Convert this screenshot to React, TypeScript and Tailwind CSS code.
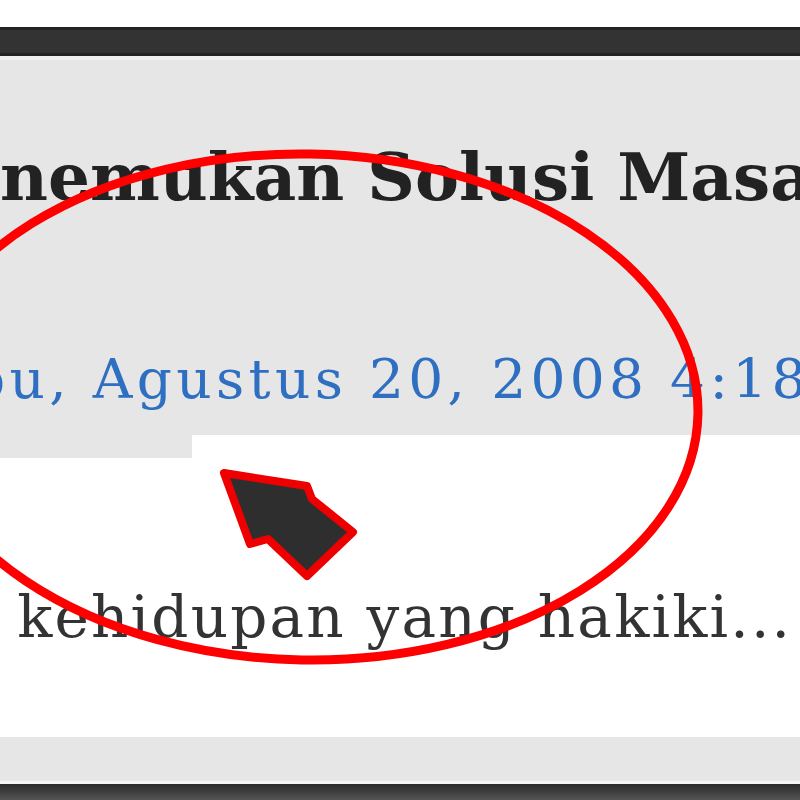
export default function App() {
  const serif = { fontFamily: '"DejaVu Serif", "Liberation Serif", serif' };
  return (
    <div className="relative w-[800px] h-[800px] overflow-hidden bg-white" style={serif}>
      {/* top frame */}
      <div className="h-[27px] bg-white" />
      <div className="h-[29px] bg-[#333333] border-y-[3px] border-[#232323]" />
      <div className="h-[4px] bg-[#f0f0f0]" />

      {/* post header */}
      <div className="h-[375px] bg-[#e6e6e6] pt-[84px] overflow-hidden">
        <h1 className="whitespace-nowrap text-[66px] leading-none font-bold text-[#222222]">
          nemukan Solusi Masalah
        </h1>
        <div className="mt-[142px] whitespace-nowrap text-[55px] leading-none tracking-[4.3px] text-[#2f6fc2]">
          <span className="-ml-[30px]">bu, Agustus 20, 2008 4:18 PM</span>
        </div>
      </div>

      {/* date tab remainder */}
      <div className="flex h-[23px]">
        <div className="w-[192px] bg-[#e6e6e6]" />
        <div className="flex-1 bg-white" />
      </div>

      {/* post body */}
      <div className="h-[279px] bg-white pt-[130px] overflow-hidden">
        <p className="whitespace-nowrap text-[58px] leading-none tracking-[2.2px] text-[#333333] -ml-[43px]">
          n kehidupan yang hakiki...
        </p>
      </div>

      {/* bottom frame */}
      <div className="h-[44px] bg-[#e6e6e6]" />
      <div className="h-[3px] bg-[#f4f4f4]" />
      <div className="h-[16px] bg-gradient-to-b from-[#2a2a2a] to-[#555555]" />

      {/* annotation overlay */}
      <svg className="absolute inset-0 pointer-events-none" width="800" height="800" viewBox="0 0 800 800">
        <ellipse
          cx="306"
          cy="407"
          rx="392"
          ry="253"
          transform="rotate(1 306 407)"
          fill="none"
          stroke="#ff0000"
          strokeWidth="9"
        />
        <polygon
          points="224,473 307,486 312,499 353,532 307,576 268,539 250,544"
          fill="#2e2e2e"
          stroke="#ee0000"
          strokeWidth="8"
          strokeLinejoin="round"
        />
      </svg>
    </div>
  );
}
